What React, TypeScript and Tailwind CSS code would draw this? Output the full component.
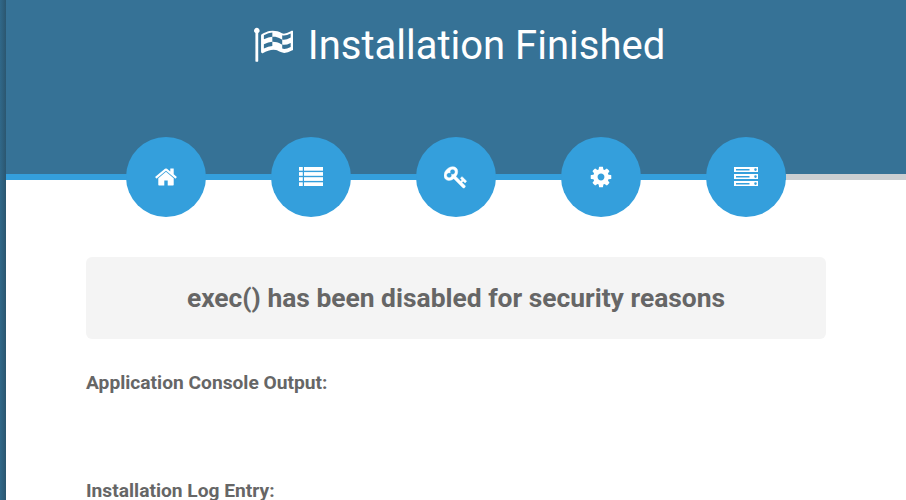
import type { ReactNode } from "react";

function FlagIcon() {
  return (
    <svg viewBox="0 0 1792 1792" className="mb-[3px] size-[39.500px] shrink-0" fill="currentColor">
      <path d="M832 951v-192q-181 16-384 117v185q205-96 384-110zm0-418v-197q-172 8-384 126v189q215-111 384-118zm832 463v-184q-235 116-384 71v-224q-20-6-39-15-5-3-33-17t-34.5-17-31.5-15-34.5-15.5-32.5-13-36-12.5-35-8.500-39.500-7.500-39.500-4-44-2q-23 0-49 3v222h19q102 0 192.500 29t197.500 82q19 9 39 15v188q42 17 91 17 120 0 293-92zm0-427v-189q-169 91-306 91-45 0-78-8v196q148 42 384-90zm-1408-313q0 35-17.500 64t-46.500 46v1266q0 14-9 23t-23 9h-64q-14 0-23-9t-9-23v-1266q-29-17-46.500-46t-17.500-64q0-53 37.500-90.500t90.500-37.500 90.500 37.500 37.500 90.500zm1536 64v763q0 39-35 57-10 5-17 9-218 116-369 116-88 0-158-35l-28-14q-64-33-99-48t-91-29-114-14q-102 0-235.500 44t-228.500 102q-15 9-33 9-16 0-32-8-32-19-32-56v-742q0-35 31-55 35-21 78.500-42.500t114-52 152.500-49.500 155-19q112 0 209 31t209 86q38 19 89 19 122 0 310-112 22-12 31-17 31-16 62 2 31 20 31 55z" />
    </svg>
  );
}

function Glyph({ children }: { children: ReactNode }) {
  return (
    <svg viewBox="0 0 1792 1792" className="h-6 w-6" fill="currentColor" fillRule="evenodd">
      {children}
    </svg>
  );
}

const home = (
  <Glyph>
    <path d="M1472 992v480q0 26-19 45t-45 19h-384v-384h-256v384h-384q-26 0-45-19t-19-45v-480q0-1 .5-3t.5-3l575-474 575 474q1 2 1 6zm223-69l-62 74q-8 9-21 11h-3q-13 0-21-7l-692-577-692 577q-12 8-24 7-13-2-21-11l-62-74q-8-10-7-23.500t11-21.500l719-599q32-26 76-26t76 26l244 204v-195q0-14 9-23t23-9h192q14 0 23 9t9 23v408l219 182q10 8 11 21.500t-7 23.500z" />
  </Glyph>
);

const list = (
  <svg viewBox="0 0 24 24" className="h-6 w-6" fill="currentColor">
    {[2, 7.1, 12.2, 17.3].map((y) => (
      <g key={y}>
        <rect x="0" y={y} width="3.8" height="3.7" />
        <rect x="5" y={y} width="19" height="3.7" />
      </g>
    ))}
  </svg>
);

const key = (
  <Glyph>
    <path stroke="currentColor" strokeWidth="35" d="M832 512q0-80-56-136t-136-56-136 56-56 136q0 42 19 83-41-19-83-19-80 0-136 56t-56 136 56 136 136 56 136-56 56-136q0-42-19-83 41 19 83 19 80 0 136-56t56-136zm851 704q0 17-49 66t-66 49q-9 0-28.500-16t-36.500-33-38.500-40-24.500-26l-96 96 220 220q28 28 28 68 0 42-39 81t-81 39q-40 0-68-28l-671-671q-176 131-365 131-163 0-265.500-102.500t-102.500-265.500q0-160 95-313t248-248 313-95q163 0 265.500 102.500t102.500 265.500q0 189-131 365l355 355 96-96q-3-3-26-24.500t-40-38.500-33-36.500-16-28.500q0-17 49-66t66-49q13 0 23 10 6 6 46 44.500t82 79.500 86.500 86 73 78 28.500 41z" />
  </Glyph>
);

const cog = (
  <Glyph>
    <path d="M1152 896q0-106-75-181t-181-75-181 75-75 181 75 181 181 75 181-75 75-181zm512-109v222q0 12-8 23t-20 13l-185 28q-19 54-39 91 35 50 107 138 10 12 10 25t-9 23q-27 37-99 108t-94 71q-12 0-26-9l-138-108q-44 23-91 38-16 136-29 186-7 28-36 28h-222q-14 0-24.500-8.500t-11.500-21.500l-28-184q-49-16-90-37l-141 107q-10 9-25 9-14 0-25-11-126-114-165-168-7-10-7-23 0-12 8-23 15-21 51-66.500t54-70.500q-27-50-41-99l-183-27q-13-2-21-12.500t-8-23.500v-222q0-12 8-23t19-13l186-28q14-46 39-92-40-57-107-138-10-12-10-24 0-10 9-23 26-36 98.500-107.500t94.500-71.500q13 0 26 10l138 107q44-23 91-38 16-136 29-186 7-28 36-28h222q14 0 24.500 8.500t11.500 21.500l28 184q49 16 90 37l142-107q9-9 24-9 13 0 25 10 129 119 165 170 7 8 7 22 0 12-8 23-15 21-51 66.500t-54 70.500q26 50 41 98l183 28q13 2 21 12.500t8 23.500z" />
  </Glyph>
);

const server = (
  <svg viewBox="0 0 24 24" className="h-6 w-6" fill="currentColor" fillRule="evenodd">
    {[2, 9, 16].map((y) => (
      <g key={y} transform={`translate(0 ${y})`}>
        <path d="M0 0H24V5H0ZM2 2V3.400H15.500V2ZM21.500 1.300A1.300 1.300 0 1 0 21.500 3.900A1.300 1.300 0 1 0 21.500 1.300Z" />
      </g>
    ))}
  </svg>
);

const steps = [home, list, key, cog, server];

export default function App() {
  return (
    <div className="flex h-[500px] w-[906px] overflow-hidden bg-white font-['Roboto',sans-serif] text-[#666]">
      <div className="w-1.5 shrink-0 bg-linear-to-r from-[#306889] to-[#2b566f]" />
      <div className="flex min-w-0 flex-1 flex-col">
        <header className="flex h-[174px] shrink-0 justify-center bg-[#367296] pt-[22px] text-white">
          <div className="flex h-12 items-center gap-[14.500px] pl-[7px]">
            <FlagIcon />
            <h1 className="text-[40px] leading-[48px] whitespace-nowrap">Installation Finished</h1>
          </div>
        </header>
        <div className="flex h-1.5 shrink-0 items-center bg-[#cbcfd2]">
          <div className="flex h-1.5 w-[780px] items-center gap-[65px] bg-[#349fdc] pl-[120px] text-white">
            {steps.map((icon, i) => (
              <div key={i} className="flex size-20 shrink-0 items-center justify-center rounded-full bg-[#349fdc]">
                {icon}
              </div>
            ))}
          </div>
        </div>
        <main className="px-20 pt-[77px] font-bold">
          <div className="flex h-[82px] items-center justify-center rounded-md bg-[#f4f4f4]">
            <h2 className="text-[26.400px] leading-8 whitespace-nowrap">exec() has been disabled for security reasons</h2>
          </div>
          <h3 className="mt-8 text-[19.200px] leading-6">Application Console Output:</h3>
          <h3 className="mt-[84px] text-[19.200px] leading-6">Installation Log Entry:</h3>
        </main>
      </div>
    </div>
  );
}
